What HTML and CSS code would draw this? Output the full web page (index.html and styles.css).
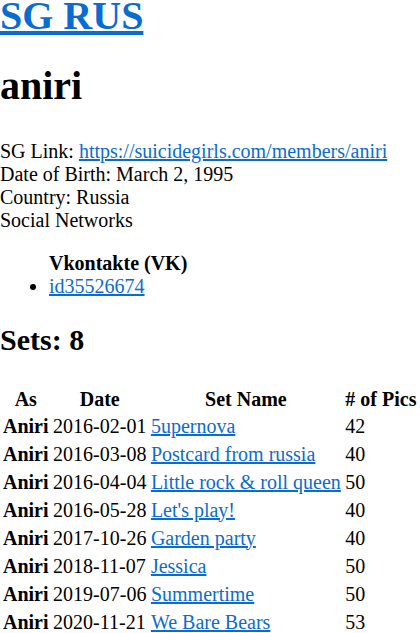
FILE: index.html
```html
<!DOCTYPE html>
<html lang="en">
<head>
<meta charset="UTF-8">
<meta name="viewport" content="width=device-width, initial-scale=1.0">
<title>aniri - SG RUS</title>
<link rel="stylesheet" href="styles.css">
</head>
<body>
    <h1 class="site-title"><a href="#">SG RUS</a></h1>
    <h1 class="model-name">aniri</h1>
    <p class="info">
        SG Link: <a href="#">https://suicidegirls.com/members/aniri</a><br>
        Date of Birth: March 2, 1995<br>
        Country: Russia<br>
        Social Networks
    </p>
    <ul class="networks">
        <div class="network-name">Vkontakte (VK)</div>
        <li><a href="#">id35526674</a></li>
    </ul>

    <h2 class="sets-title">Sets: 8</h2>
    <table class="sets">
        <tr><th>As</th><th>Date</th><th>Set Name</th><th># of Pics</th></tr>
        <tr><td class="as">Aniri</td><td>2016-02-01</td><td><a href="#">5upernova</a></td><td>42</td></tr>
        <tr><td class="as">Aniri</td><td>2016-03-08</td><td><a href="#">Postcard from russia</a></td><td>40</td></tr>
        <tr><td class="as">Aniri</td><td>2016-04-04</td><td><a href="#">Little rock &amp; roll queen</a></td><td>50</td></tr>
        <tr><td class="as">Aniri</td><td>2016-05-28</td><td><a href="#">Let's play!</a></td><td>40</td></tr>
        <tr><td class="as">Aniri</td><td>2017-10-26</td><td><a href="#">Garden party</a></td><td>40</td></tr>
        <tr><td class="as">Aniri</td><td>2018-11-07</td><td><a href="#">Jessica</a></td><td>50</td></tr>
        <tr><td class="as">Aniri</td><td>2019-07-06</td><td><a href="#">Summertime</a></td><td>50</td></tr>
        <tr><td class="as">Aniri</td><td>2020-11-21</td><td><a href="#">We Bare Bears</a></td><td>53</td></tr>
    </table>
</body>
</html>
```

FILE: styles.css
```css
body {
    margin: 0;
    font-family: "Liberation Serif", "Times New Roman", serif;
    font-size: 20px;
    color: #000;
}
a {
    color: #0a6cd0;
}
h1 {
    font-size: 40px;
}
.site-title {
    margin: 0;
    line-height: 32px;
}
.model-name {
    margin: 30px 0 31px;
}
.info {
    margin: 0;
}
.networks {
    margin: 20px 0;
    padding-left: 49px;
}
.network-name {
    font-weight: bold;
}
.sets-title {
    font-size: 30px;
    margin: 25px 0 27px;
}
.sets {
    border-spacing: 2px;
}
.sets th,
.sets td {
    padding: 1.5px 1.5px 1.5px 1px;
}
.sets th {
    padding-bottom: 0.5px;
}
.sets .as {
    font-weight: bold;
}
```
